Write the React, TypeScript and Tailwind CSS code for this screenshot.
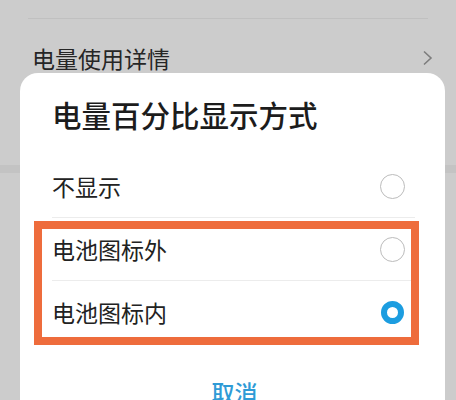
const options = [
    { label: "不显示", checked: false },
    { label: "电池图标外", checked: false },
    { label: "电池图标内", checked: true },
];

const Radio = ({ checked }: { checked: boolean }) =>
    checked ? (
        <div className="w-[23px] h-[23px] rounded-full border-[6px] border-[#1c9de0] bg-white mr-[11px]" />
    ) : (
        <div className="w-[25px] h-[25px] rounded-full border-[1.5px] border-[#bcbcbc] bg-white mr-[10px]" />
    );

const App = () => {
    return (
        <div
            className="relative h-[400px] w-[456px] overflow-hidden bg-[#cccccc]"
            style={{ fontFamily: '"Noto Sans CJK SC", "Noto Sans", sans-serif' }}
        >
            {/* settings page behind the dialog */}
            <div className="pt-[18px]">
                <div className="mx-[28px] h-px bg-[#c0c0c0]" />
                <div className="flex items-center justify-between h-[78px] pl-[32px] pr-[22px]">
                    <span className="text-[23px] text-[#262626] leading-none">电量使用详情</span>
                    <svg width="12" height="16" viewBox="0 0 12 16" fill="none">
                        <polyline points="2,1.5 9,8 2,14.5" stroke="#7d7d7d" strokeWidth="1.6" />
                    </svg>
                </div>
                <div className="h-[68px]" />
                <div className="h-[8px] bg-[#c3c3c3]" />
            </div>

            {/* dialog */}
            <div className="absolute left-[20px] top-[73px] w-[425px] h-[340px] rounded-t-[18px] bg-white">
                <div className="pt-[23px] pb-[23px] pl-[32px] h-[82px]">
                    <h2 className="text-[29.5px] leading-[36px] font-medium text-[#1c1c1c]">
                        电量百分比显示方式
                    </h2>
                </div>
                <div className="pl-[32px] pr-[30px]">
                    {options.map((o, i) => (
                        <div
                            key={o.label}
                            className={
                                i < options.length - 1
                                    ? "flex items-center justify-between h-[63px] border-b border-[#ececec]"
                                    : "flex items-center justify-between h-[62px]"
                            }
                        >
                            <span className="text-[23px] leading-none text-[#222222]">{o.label}</span>
                            <Radio checked={o.checked} />
                        </div>
                    ))}
                </div>
                <div className="flex justify-center pt-[35px] pl-[4px]">
                    <span className="text-[23px] leading-[28px] font-medium text-[#2f9bd6]">取消</span>
                </div>
            </div>

            {/* highlight annotation */}
            <div className="absolute left-[34px] top-[221px] w-[385px] h-[124px] border-[8px] border-[#ee6c3c]" />
        </div>
    );
};

export default App;
